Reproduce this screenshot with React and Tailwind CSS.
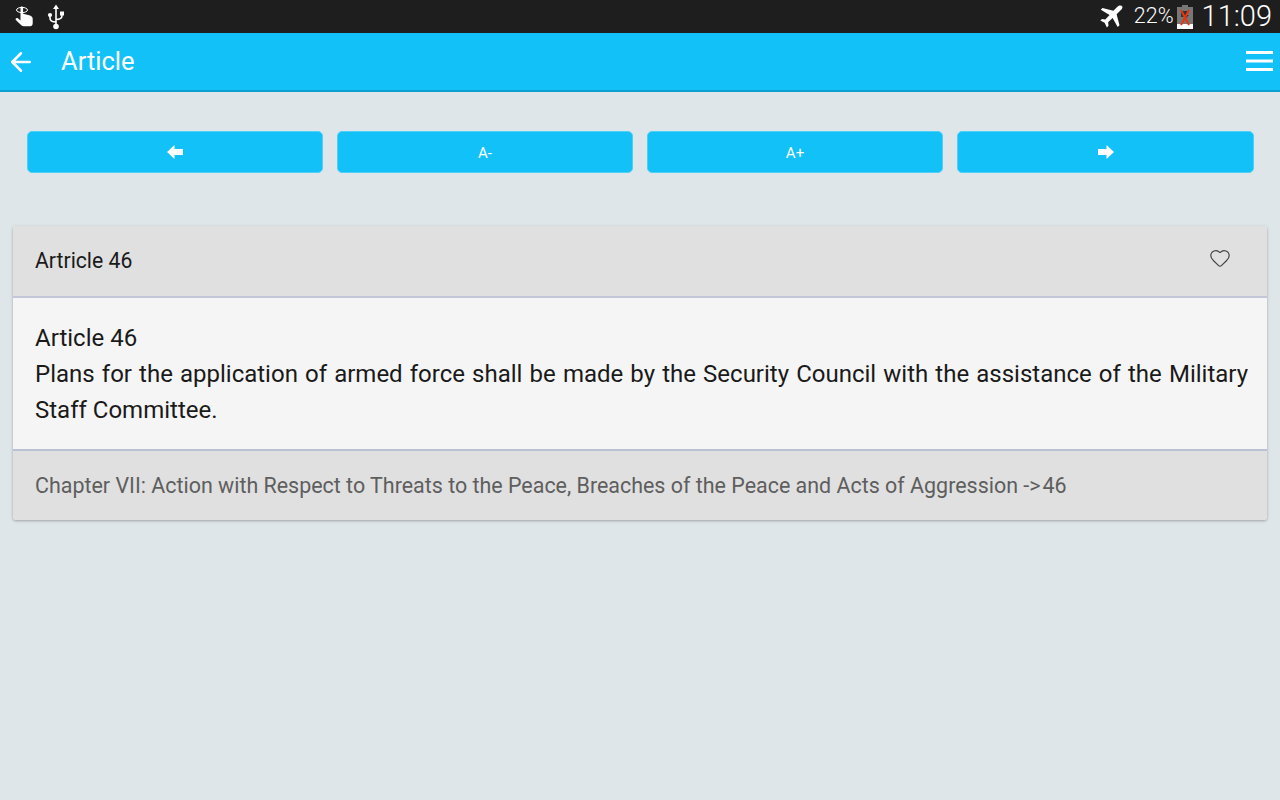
import { ArrowLeft, Heart } from 'lucide-react';

function TouchIcon() {
  return (
    <svg width="22" height="24" viewBox="0 0 22 24" fill="none">
      <ellipse cx="7" cy="5" rx="5.5" ry="2.6" stroke="#fff" strokeWidth="1" />
      <path d="M5.5 2.5c0-1.4 2.6-1.4 2.6 0v6.2l6 1.6c2 .5 3.6 1.5 3.6 3.6v4.6c0 1.6-1 2.7-2.6 2.7H8.4c-1.2 0-1.9-.5-2.6-1.4L.8 15c-.8-1.4 1-2.6 2.3-1.5l2.4 1.9z" fill="#fff" />
    </svg>
  );
}

function UsbIcon() {
  return (
    <svg width="18" height="26" viewBox="0 0 18 26" fill="none">
      <path d="M9 0.5l3 4.5H6z" fill="#fff" />
      <path d="M9 4v17M9 18c-4 0-6-1.5-6-4v-2M9 15.5c4 0 6-1.500 6-4V10" stroke="#fff" strokeWidth="1.600" />
      <circle cx="3" cy="11" r="2.100" fill="#fff" />
      <rect x="13" y="7.500" width="4" height="4" fill="#fff" />
      <circle cx="9" cy="22.500" r="2.800" fill="#fff" />
    </svg>
  );
}

function PlaneIcon() {
  return (
    <svg width="24" height="24" viewBox="0 0 24 24">
      <path d="M23 1c-1-1-3.200-.6-4.600.8l-4 4L3.500 3 1.800 4.700l8.800 5.200-4.300 4.500-3.300-.5L1.300 15.600l4.300 2.200 2.300 4.600 1.600-1.700-.4-3.400 4.500-4.300 5.100 9 1.800-1.700-2.900-11 4-4C23.300 4 24 2 23 1z" fill="#fff" />
    </svg>
  );
}

function BatteryIcon() {
  return (
    <svg width="16" height="24" viewBox="0 0 16 24">
      <rect x="5" y="0" width="6" height="2.500" fill="#777" />
      <rect x="0" y="2" width="16" height="17" fill="#777" />
      <rect x="0" y="19" width="16" height="5" fill="#fff" />
      <path d="M4 6h8l-3 4h3l-6 6 1.500-4H4z" fill="#333" />
      <path d="M4 5l8 15M12 5L4 20" stroke="#e8350f" strokeWidth="2" />
    </svg>
  );
}

function MenuIcon() {
  return (
    <svg width="27" height="21" viewBox="0 0 27 21">
      <rect x="0" y="0" width="27" height="3" fill="#fff" />
      <rect x="0" y="8.500" width="27" height="3" fill="#fff" />
      <rect x="0" y="17" width="27" height="3" fill="#fff" />
    </svg>
  );
}

function ArrowGlyph({ flip }) {
  return (
    <svg width="16" height="16" viewBox="0 0 16 16" className={flip ? 'rotate-180' : ''}>
      <path d="M0 8l7.500-7v4h8.500v6H7.500v4z" fill="#fff" />
    </svg>
  );
}

function ToolButton({ children }) {
  return (
    <button className="h-[42px] rounded-[5px] bg-[#12c1f7] border border-[#4fd0f8] flex items-center justify-center text-white text-[15px]">
      {children}
    </button>
  );
}

export default function App() {
  return (
    <div className="w-[1280px] h-[800px] overflow-hidden flex flex-col bg-[#dfe6e9] font-['Roboto',sans-serif]">
      <div className="h-[33px] bg-[#1e1e1e] flex items-center justify-between pl-[15px] pr-[8px] text-white">
        <div className="flex items-center gap-[10px]">
          <TouchIcon />
          <UsbIcon />
        </div>
        <div className="flex items-center">
          <PlaneIcon />
          <span className="ml-[11px] text-[21.500px] font-light">22%</span>
          <span className="ml-[3px]"><BatteryIcon /></span>
          <span className="ml-[9px] text-[29px] font-light leading-none">11:09</span>
        </div>
      </div>

      <div className="h-[59px] bg-[#12c1f7] border-b-2 border-[#0ba0cf] flex items-center justify-between pl-[6px] pr-[7px] text-white">
        <div className="flex items-center">
          <ArrowLeft size={30} strokeWidth={2} />
          <span className="ml-[25px] text-[25.500px]">Article</span>
        </div>
        <MenuIcon />
      </div>

      <div className="grid grid-cols-[296px_296px_296px_297px] gap-[14px] pl-[27px] pt-[39px]">
        <ToolButton><ArrowGlyph /></ToolButton>
        <ToolButton><span className="pt-[2px]">A-</span></ToolButton>
        <ToolButton><span className="pt-[2px]">A+</span></ToolButton>
        <ToolButton><ArrowGlyph flip /></ToolButton>
      </div>

      <div className="mx-[13px] mt-[53px] rounded-[3px] overflow-hidden shadow-[0_1px_3px_rgba(0,0,0,0.3)]">
        <div className="h-[72px] bg-[#e0e0e0] border-b-2 border-[#c3c6d6] flex items-center justify-between pl-[22px] pr-[36px] text-[21.200px] text-[#1a1a1a]">
          <span>Artricle 46</span>
          <Heart size={22} strokeWidth={1.300} className="text-[#444] mb-[6px]" />
        </div>
        <div className="bg-[#f5f5f5] border-b-2 border-[#b9c2d4] pl-[22px] pr-[19px] pt-[22px] pb-[21px] text-[24px] leading-[36px] text-justify text-[#1a1a1a]">
          <div>Article 46</div>
          <div>Plans for the application of armed force shall be made by the Security Council with the assistance of the Military Staff Committee.</div>
        </div>
        <div className="h-[69px] pt-[2px] bg-[#e0e0e0] flex items-center pl-[22px] text-[21.450px] text-[#5e5e5e]">
          <span>Chapter VII: Action with Respect to Threats to the Peace, Breaches of the Peace and Acts of Aggression -&gt;<span className="ml-[2px]">46</span></span>
        </div>
      </div>
    </div>
  );
}
